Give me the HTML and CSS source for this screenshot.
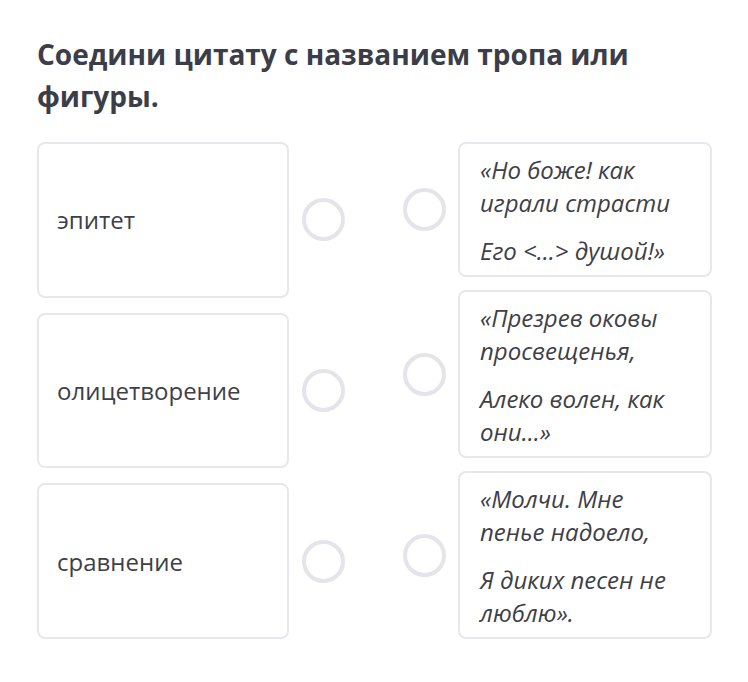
FILE: index.html
```html
<!DOCTYPE html>
<html lang="ru">
<head>
<meta charset="utf-8">
<link rel="stylesheet" href="styles.css">
</head>
<body>
<main class="task">
  <h1 class="title">Соедини цитату с названием тропа или фигуры.</h1>
  <div class="match">
    <div class="col col-left">
      <div class="row">
        <div class="card term">эпитет</div>
        <span class="dot"></span>
      </div>
      <div class="row">
        <div class="card term">олицетворение</div>
        <span class="dot"></span>
      </div>
      <div class="row">
        <div class="card term">сравнение</div>
        <span class="dot"></span>
      </div>
    </div>
    <div class="col col-right">
      <div class="row">
        <span class="dot"></span>
        <div class="card quote">
          <p>«Но боже! как играли страсти</p>
          <p>Его &lt;...&gt; душой!»</p>
        </div>
      </div>
      <div class="row">
        <span class="dot"></span>
        <div class="card quote">
          <p>«Презрев оковы просвещенья,</p>
          <p>Алеко волен, как они...»</p>
        </div>
      </div>
      <div class="row">
        <span class="dot"></span>
        <div class="card quote">
          <p>«Молчи. Мне пенье надоело,</p>
          <p>Я диких песен не люблю».</p>
        </div>
      </div>
    </div>
  </div>
</main>
</body>
</html>
```

FILE: styles.css
```css
html, body {
  margin: 0;
  padding: 0;
  background: #ffffff;
}

body {
  font-family: "Open Sans", "Noto Sans", sans-serif;
  color: #3b3c46;
}

.task {
  width: 674px;
  padding: 33px 0 0 37px;
}

.title {
  margin: 0;
  font-size: 28px;
  font-weight: 700;
  line-height: 42px;
  color: #3b3d48;
  width: 640px;
}

.match {
  display: flex;
  gap: 58px;
  margin-top: 25px;
  align-items: stretch;
}

.col {
  display: flex;
  flex-direction: column;
}

.col-left {
  gap: 15px;
}

.col-right {
  gap: 13px;
}

.row {
  display: flex;
  align-items: center;
}

.col-left .row {
  flex: 1;
  gap: 13px;
}

.col-left .row .card {
  align-self: stretch;
}

.col-right .row {
  gap: 12px;
}

.card {
  box-sizing: border-box;
  border: 2px solid #e8e8ec;
  border-radius: 8px;
  background: #fff;
}

.term {
  width: 252px;
  display: flex;
  align-items: center;
  padding: 0 18px;
  font-size: 24px;
  color: #3e3f48;
}

.quote {
  width: 254px;
  padding: 9px 22px 8px 20px;
  font-style: italic;
  font-size: 24px;
  line-height: 33px;
  color: #3e3f48;
}

.quote p {
  margin: 0;
}

.quote p + p {
  margin-top: 15px;
}

.dot {
  box-sizing: border-box;
  flex: none;
  width: 43px;
  height: 43px;
  border: 4px solid #e4e4ea;
  border-radius: 50%;
}
```
